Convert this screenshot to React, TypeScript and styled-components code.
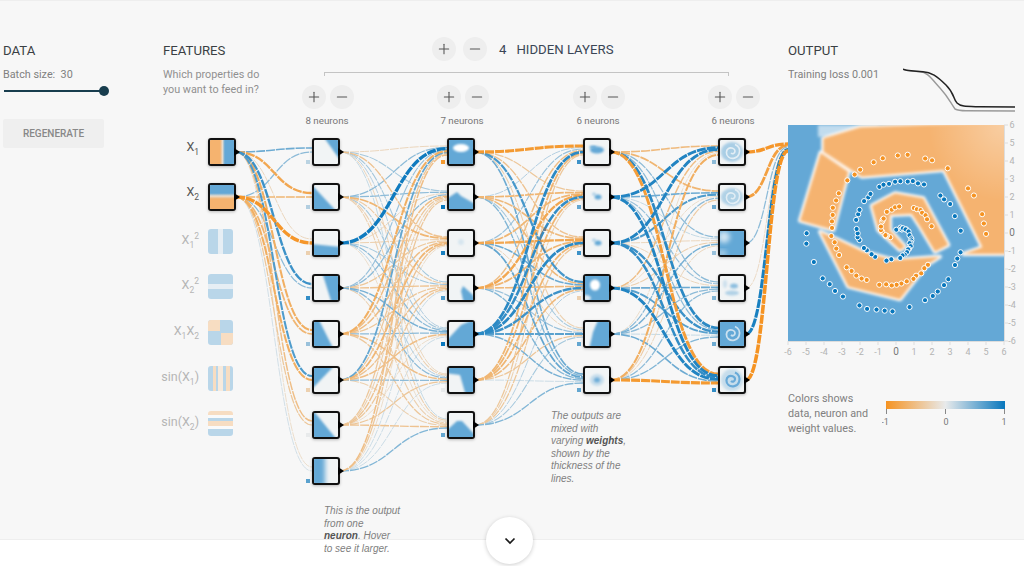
import React from 'react';
import styled, { createGlobalStyle } from 'styled-components';
import { Plus, Minus } from 'lucide-react';

const BLUE = '#0877bd';
const ORANGE = '#f59322';
const ZERO = '#e8eaeb';
const FILL_BLUE = '#64a8d6';
const FILL_ORANGE = '#f5b36f';
const COLUMN_LEFT = 163;
const NODE_SIZE = 28;

const LAYER_LEFT = [208, 312, 447, 583, 718];
const ROW_TOP = [137, 182, 228, 273, 319, 365, 410, 456];
const NEURONS = [2, 8, 7, 6, 6];

// weights, one row per source neuron: minus is orange, plus is blue
const WEIGHTS: number[][][] = [
  [
    [0.45, -0.7, -0.15, 0.7, -0.6, 0.6, -0.4, -0.1],
    [0.3, -0.5, -0.95, 0.3, -0.5, -0.6, -0.3, 0.06],
  ],
  [
    [-0.15, 0.2, -0.35, 0.2, 0.15, -0.15, 0.1],
    [0.3, 0.3, -0.5, -0.25, 0.2, -0.2, -0.2],
    [0.95, -0.15, -0.2, 0.2, 0.3, 0.15, -0.1],
    [0.25, 0.3, -0.3, -0.35, 0.4, 0.3, -0.2],
    [-0.6, -0.4, -0.4, -0.3, 0.3, -0.4, -0.3],
    [0.5, -0.3, -0.5, -0.35, -0.4, 0.3, -0.2],
    [-0.3, -0.2, -0.35, -0.3, -0.1, -0.3, -0.35],
    [-0.4, -0.3, -0.1, 0.08, 0.08, 0.08, 0.35],
  ],
  [
    [-0.9, -0.3, -0.35, 0.65, -0.2, 0.45],
    [0.15, -0.5, -0.45, -0.45, 0.2, 0.35],
    [0.25, -0.5, -0.7, 0.45, -0.15, 0.5],
    [-0.4, -0.7, -0.5, -0.45, 0.25, 0.35],
    [0.8, 0.75, 0.8, 0.7, 0.55, 0.4],
    [-0.5, -0.5, -0.5, -0.45, -0.3, 0.08],
    [-0.3, -0.2, -0.3, 0.15, 0.2, 0.35],
  ],
  [
    [-0.45, -0.5, 0.3, 0.3, 0.8, -0.85],
    [0.85, 0.45, 0.1, 0.25, 0.3, 0.85],
    [0.85, 0.6, -0.15, -0.15, 0.7, 0.75],
    [-0.4, -0.1, -0.2, 0.45, 0.55, 0.85],
    [-0.1, 0.3, 0.4, 0.3, 0.1, 0.45],
    [-0.6, -0.25, -0.15, 0.3, 0.35, -0.9],
  ],
];
const OUTPUT_WEIGHTS = [-0.95, -0.8, 0.3, -0.12, 0.9, -1];

const BIAS = [
  [],
  [0.12, 0.15, -0.2, 0.75, 0.25, -0.2, 0, 0.55],
  [-0.9, 1, 0.9, 0.6, 1, 0, 0.5],
  [0.7, 0.5, 0.7, -0.2, 0.5, 0.5],
  [0.3, 0.45, 0.25, 0.35, 0.45, 0.75],
];

const mix = (a: string, b: string, t: number) => {
  const ch = (s: string, i: number) => parseInt(s.slice(1 + i * 2, 3 + i * 2), 16);
  const out = [0, 1, 2].map((i) => Math.round(ch(a, i) + (ch(b, i) - ch(a, i)) * t));
  return `rgb(${out.join(',')})`;
};
const weightColor = (w: number) => mix(ZERO, w < 0 ? ORANGE : BLUE, Math.pow(Math.abs(w), 0.75));

const curve = (sx: number, sy: number, tx: number, ty: number) => {
  const mx = (sx + tx) / 2;
  return `M${sx} ${sy}C${mx} ${sy} ${mx} ${ty} ${tx} ${ty}`;
};

type Link = { d: string; w: number };

const buildLinks = () => {
  const links: Link[] = [];
  WEIGHTS.forEach((matrix, layer) => {
    matrix.forEach((row, s) => {
      row.forEach((w, t) => {
        const fan = layer === 0 ? -4 + s * 4 : -6 + (s / (matrix.length - 1)) * 9;
        links.push({
          d: curve(
            LAYER_LEFT[layer] + NODE_SIZE - COLUMN_LEFT,
            ROW_TOP[s] + NODE_SIZE / 2,
            LAYER_LEFT[layer + 1] - COLUMN_LEFT,
            ROW_TOP[t] + NODE_SIZE / 2 + fan,
          ),
          w,
        });
      });
    });
  });
  OUTPUT_WEIGHTS.forEach((w, s) => {
    links.push({
      d: curve(LAYER_LEFT[4] + NODE_SIZE - COLUMN_LEFT, ROW_TOP[s] + NODE_SIZE / 2, 788 - COLUMN_LEFT, 143 + s * 1.4),
      w,
    });
  });
  return links.sort((a, b) => Math.abs(a.w) - Math.abs(b.w));
};

const GlobalStyle = createGlobalStyle`
  html, body {
    margin: 0;
    padding: 0;
    background: #fff;
    font-family: Roboto, "Liberation Sans", sans-serif;
    overflow: hidden;
  }
`;

const Main = styled.main`
  display: flex;
  height: 539px;
  background: #f7f7f7;
  border-top: 1px solid #eee;
  box-sizing: border-box;
`;

const DataColumn = styled.section`
  width: 163px;
  padding: 43px 0 0 3px;
  box-sizing: border-box;
`;

const NetworkColumn = styled.section`
  position: relative;
  z-index: 1;
  width: 625px;
  padding-top: 43px;
  box-sizing: border-box;
`;

const OutputColumn = styled.section`
  position: relative;
  z-index: 2;
  width: 236px;
  padding-top: 43px;
  box-sizing: border-box;
`;

const Heading = styled.h4`
  margin: 0;
  font-size: 13.2px;
  line-height: 14px;
  font-weight: 400;
  color: #3a3f44;
`;

const Small = styled.div`
  margin-top: 10px;
  font-size: 10.8px;
  line-height: 14px;
  color: #808080;
  white-space: pre;
`;

const SliderRow = styled.div`
  position: relative;
  width: 101px;
  height: 10px;
  margin-top: 4px;
  &::before {
    content: '';
    position: absolute;
    left: 1px;
    right: 0;
    top: 4px;
    height: 2px;
    background: #183d4e;
  }
`;

const SliderThumb = styled.span`
  position: absolute;
  right: -5px;
  top: 0;
  width: 10px;
  height: 10px;
  border-radius: 50%;
  background: #183d4e;
`;

const RegenerateButton = styled.button`
  display: block;
  width: 101px;
  height: 29px;
  margin-top: 23px;
  padding: 0;
  border: 0;
  border-radius: 2px;
  background: #efefef;
  color: #888;
  font-family: Roboto, sans-serif;
  font-size: 10px;
  font-weight: 500;
`;

const NetworkHeader = styled.header`
  display: flex;
`;

const FeaturesBlock = styled.div`
  flex: 0 0 269px;
`;

const FeaturesHint = styled.p`
  margin: 9px 0 0;
  font-size: 10.8px;
  line-height: 15px;
  color: #909090;
`;

const HiddenControls = styled.div`
  display: flex;
  align-items: center;
  height: 24px;
  margin-top: -7px;
`;

const RoundButton = styled.button`
  display: flex;
  align-items: center;
  justify-content: center;
  width: 24px;
  height: 24px;
  padding: 0;
  margin-right: ${(p: { $gap?: number }) => p.$gap ?? 7}px;
  border: 0;
  border-radius: 50%;
  background: #eeeeee;
  color: #555;
`;

const LayerCount = styled.span`
  margin-left: 5px;
  font-size: 13.2px;
  color: #3a4656;
`;

const LayerTitle = styled.span`
  margin-left: 10px;
  font-size: 13.2px;
  color: #3a4656;
`;

const Bracket = styled.div`
  position: absolute;
  left: ${324 - COLUMN_LEFT}px;
  top: 71px;
  width: 405px;
  height: 4px;
  border: 1px solid #c4c4c4;
  border-bottom: 0;
  box-sizing: border-box;
`;

const LayerControl = styled.div<{ $left: number }>`
  position: absolute;
  left: ${(p) => p.$left}px;
  top: 84px;
  width: 52px;
`;

const LayerButtons = styled.div`
  display: flex;
`;

const NeuronCount = styled.div`
  margin-top: 6px;
  margin-left: -5px;
  width: 60px;
  text-align: center;
  font-size: 9.8px;
  line-height: 12px;
  color: #777;
`;

const LinkLayer = styled.svg`
  position: absolute;
  left: 0;
  top: 0;
  overflow: visible;
`;

const Node = styled.div<{ $left: number; $top: number }>`
  position: absolute;
  left: ${(p) => p.$left}px;
  top: ${(p) => p.$top}px;
  width: ${NODE_SIZE}px;
  height: ${NODE_SIZE}px;
  box-sizing: border-box;
  border: 2px solid #111;
  border-radius: 3px;
  background: #f1f4f5;
  box-shadow: 0 1px 3px rgba(0, 0, 0, 0.25);
  &::after {
    content: '';
    position: absolute;
    left: 24px;
    top: 7.5px;
    border-left: 6px solid #000;
    border-top: 4.5px solid transparent;
    border-bottom: 4.5px solid transparent;
  }
  svg {
    display: block;
    border-radius: 1px;
  }
`;

const BiasMark = styled.span<{ $color: string }>`
  position: absolute;
  left: -8px;
  bottom: 0;
  width: 4px;
  height: 4px;
  background: ${(p) => p.$color};
`;

const InputLabel = styled.div<{ $top: number; $on: boolean }>`
  position: absolute;
  left: ${139 - COLUMN_LEFT}px;
  top: ${(p) => p.$top}px;
  width: 60px;
  text-align: right;
  font-size: 12.5px;
  line-height: 16px;
  color: ${(p) => (p.$on ? '#555' : '#b5b5b5')};
  sub,
  sup {
    font-size: 8.5px;
    line-height: 0;
  }
`;

const InputThumb = styled.div<{ $top: number }>`
  position: absolute;
  left: ${208 - COLUMN_LEFT}px;
  top: ${(p) => p.$top}px;
  width: 25px;
  height: 25px;
  border-radius: 3px;
  overflow: hidden;
  opacity: 0.4;
  svg {
    display: block;
  }
`;

const Callout = styled.p<{ $left: number; $top: number }>`
  position: absolute;
  left: ${(p) => p.$left}px;
  top: ${(p) => p.$top}px;
  margin: 0;
  font-family: "Liberation Sans", Arial, sans-serif;
  font-style: italic;
  font-size: 10px;
  line-height: 12.6px;
  color: #808080;
  white-space: nowrap;
  b {
    color: #555;
  }
`;

const LossRow = styled.div`
  display: flex;
  height: 57px;
  margin-top: 10px;
`;

const LossLabel = styled.div`
  width: 115px;
  font-size: 10.8px;
  line-height: 14px;
  color: #808080;
`;

const PlotSvg = styled.svg`
  display: block;
  overflow: visible;
`;

const Legend = styled.div`
  display: flex;
  margin-top: 30px;
`;

const LegendText = styled.p`
  width: 94px;
  margin: 0;
  font-size: 10.8px;
  line-height: 15px;
  color: #808080;
`;

const Footer = styled.footer`
  position: relative;
  height: 27px;
  background: #fff;
  border-top: 1px solid #eee;
  box-sizing: border-box;
`;

const ScrollButton = styled.div`
  position: absolute;
  left: 486px;
  top: -23px;
  display: flex;
  align-items: center;
  justify-content: center;
  z-index: 3;
  width: 47px;
  height: 47px;
  border-radius: 50%;
  background: #fff;
  box-shadow: 0 1px 4px rgba(0, 0, 0, 0.2);
`;

// ---- neuron pictures ----

const Poly = ({ p, blur = 'tb' }: { p: string; blur?: string }) => <polygon points={p} fill={FILL_BLUE} filter={`url(#${blur})`} />;

const Blob = ({ x, y, rx, ry, o = 1, fill = FILL_BLUE, blur = 'tb2' }: { x: number; y: number; rx: number; ry: number; o?: number; fill?: string; blur?: string }) => (
  <ellipse cx={x} cy={y} rx={rx} ry={ry} fill={fill} opacity={o} filter={`url(#${blur})`} />
);

const Swirl = ({ color = FILL_BLUE, o = 1, width = 2 }: { color?: string; o?: number; width?: number }) => (
  <path
    d="M11 13c1.500 1.500 4 .5 4-2s-4-4-6.500-2.500-3 6 0 8.500 9 1.500 10.500-3-.5-8-4-9.500"
    fill="none"
    stroke={color}
    strokeWidth={width}
    opacity={o}
    filter="url(#tb0)"
  />
);

const FULL = '-4,-4 28,-4 28,28 -4,28';

const NEURON_ART: React.ReactNode[][] = [
  [],
  [
    <Poly p="9,-4 28,-4 28,23" />,
    <Poly p="-4,-2 -4,28 24,28" />,
    <Poly p="-4,13 28,16 28,28 -4,28" />,
    <Poly p="8,-4 28,-4 28,28 18,28" />,
    <Poly p="-4,-4 4,-4 20,28 -4,28" />,
    <Poly p="-4,-4 22,-4 -4,23" />,
    <Poly p="-4,-2 -2,-4 24,28 -4,28" />,
    <Poly p="-4,-4 11,-4 11,28 -4,28" blur="tb3" />,
  ],
  [
    <>
      <Poly p={FULL} />
      <Blob x={12} y={8} rx={8} ry={4} fill="#fff" />
    </>,
    <Poly p="-4,15 8,7 12,11 28,20 28,28 -4,28" />,
    <Blob x={12} y={11} rx={3} ry={3} o={0.18} />,
    <Poly p="12,15 14,10 24,19 28,28 15,28" />,
    <Poly p="-4,28 -2,18 12,3 28,-4 28,28" />,
    <Poly p="-4,-4 28,-4 28,28 17,28 11,7 -4,5" />,
    <Poly p="-4,19 8,8 13,8 28,24 28,28 -4,28" />,
  ],
  [
    <>
      <Blob x={12} y={10} rx={7} ry={3.5} />
      <Blob x={8} y={7} rx={3.5} ry={1.5} />
    </>,
    <>
      <Blob x={13} y={12} rx={3.5} ry={2.5} />
      <Blob x={9} y={9} rx={2} ry={1.5} o={0.5} />
    </>,
    <>
      <Blob x={13} y={12} rx={3.5} ry={2.5} />
      <Blob x={9} y={9} rx={2} ry={1.5} o={0.5} />
    </>,
    <>
      <Poly p={FULL} />
      <Blob x={10} y={9} rx={5} ry={5.5} fill="#fff" />
      <Blob x={1} y={22} rx={5} ry={3} fill="#dfeaf2" />
    </>,
    <Poly p="28,-4 28,28 4,28 8,10 14,-4" blur="tb2" />,
    <>
      <Blob x={12} y={12} rx={7} ry={6} o={0.3} />
      <Blob x={12} y={12} rx={3} ry={2.5} o={0.9} />
    </>,
  ],
  [
    <>
      <Blob x={12} y={12} rx={11} ry={10} o={0.5} />
      <Swirl color="#eef4f8" o={0.85} width={1.6} />
    </>,
    <>
      <Blob x={12} y={12} rx={11} ry={9} o={0.45} />
      <Swirl color="#eef4f8" o={0.8} width={1.6} />
    </>,
    <>
      <Poly p={FULL} />
      <Blob x={4} y={6} rx={6} ry={6} fill="#fff" o={0.7} blur="tb3" />
      <Blob x={2} y={22} rx={5} ry={3} fill="#fff" o={0.5} blur="tb3" />
    </>,
    <>
      <Blob x={14} y={10} rx={4} ry={2.5} o={0.7} />
      <Blob x={12} y={17} rx={7} ry={2.5} o={0.45} />
      <Blob x={5} y={8} rx={2} ry={4} o={0.25} />
    </>,
    <>
      <Poly p={FULL} />
      <Swirl color="#e6eff6" o={0.8} width={1.8} />
    </>,
    <>
      <Blob x={12} y={12} rx={11} ry={11} o={0.3} />
      <Swirl color="#5ea5d6" o={0.9} width={2.2} />
    </>,
  ],
];

const NeuronArt = ({ children }: { children: React.ReactNode }) => (
  <svg width={24} height={24} viewBox="0 0 24 24">
    {children}
  </svg>
);

const LIGHT_BLUE = '#5ea5d6';
const LIGHT_ORANGE = '#f9b774';

const stripes = (vertical: boolean, bands: [number, number, string][]) =>
  bands.map(([from, to, color]) =>
    vertical ? <rect key={from} x={from} y={0} width={to - from} height={25} fill={color} /> : <rect key={from} x={0} y={from} width={25} height={to - from} fill={color} />,
  );

const INPUTS: { label: React.ReactNode; art?: React.ReactNode }[] = [
  {
    label: (
      <>
        X<sub>1</sub>
      </>
    ),
  },
  {
    label: (
      <>
        X<sub>2</sub>
      </>
    ),
  },
  {
    label: (
      <>
        X<sub>1</sub>
        <sup>2</sup>
      </>
    ),
    art: stripes(true, [
      [0, 10, LIGHT_BLUE],
      [10, 15, '#cfe3f1'],
      [15, 25, LIGHT_BLUE],
    ]),
  },
  {
    label: (
      <>
        X<sub>2</sub>
        <sup>2</sup>
      </>
    ),
    art: stripes(false, [
      [0, 10, LIGHT_BLUE],
      [10, 15, '#cfe3f1'],
      [15, 25, LIGHT_BLUE],
    ]),
  },
  {
    label: (
      <>
        X<sub>1</sub>X<sub>2</sub>
      </>
    ),
    art: (
      <>
        <rect width={25} height={25} fill={LIGHT_BLUE} />
        <rect width={12} height={11} fill={LIGHT_ORANGE} />
        <rect x={13} y={13} width={12} height={12} fill={LIGHT_ORANGE} />
      </>
    ),
  },
  {
    label: (
      <>
        sin(X<sub>1</sub>)
      </>
    ),
    art: stripes(true, [
      [0, 5, LIGHT_BLUE],
      [5, 8, LIGHT_ORANGE],
      [8, 10, LIGHT_BLUE],
      [10, 15, '#f8d9b5'],
      [15, 18, LIGHT_BLUE],
      [18, 22, LIGHT_ORANGE],
      [22, 25, LIGHT_BLUE],
    ]),
  },
  {
    label: (
      <>
        sin(X<sub>2</sub>)
      </>
    ),
    art: stripes(false, [
      [0, 4, LIGHT_ORANGE],
      [4, 7, '#fff'],
      [7, 10, LIGHT_BLUE],
      [10, 15, LIGHT_ORANGE],
      [15, 18, '#fff'],
      [18, 25, LIGHT_BLUE],
    ]),
  },
];

// ---- output heatmap ----

const toPlot = (pts: number[][]) => pts.map(([x, y]) => `${(x - 24) / 3},${(y - 285) / 3}`).join(' ');

const ORANGE_AREAS = [
  toPlot([[130, 325], [240, 292], [690, 275], [690, 672], [550, 672], [607, 652], [492, 420], [245, 440], [130, 365]]),
  toPlot([[122, 368], [205, 425], [160, 600], [60, 572]]),
  toPlot([[165, 625], [250, 665], [340, 690], [480, 680], [440, 705], [360, 808], [205, 770], [120, 605]]),
  toPlot([[275, 527], [345, 490], [430, 505], [505, 645], [465, 665], [420, 590], [395, 552], [330, 555], [330, 600], [375, 650], [360, 660], [295, 600]]),
];

const spiralPoints = () => {
  let seed = 17;
  const rnd = () => {
    seed = (seed * 16807) % 2147483647;
    return seed / 2147483647;
  };
  const points: { x: number; y: number; color: string }[] = [];
  [
    { delta: 0, color: BLUE },
    { delta: Math.PI, color: ORANGE },
  ].forEach(({ delta, color }) => {
    for (let i = 3; i <= 100; i++) {
      const keep = rnd() < 0.72;
      const r = (i / 100) * 5;
      const t = 1.75 * (i / 100) * 2 * Math.PI + delta;
      const jx = (rnd() - 0.5) * 0.12;
      const jy = (rnd() - 0.5) * 0.12;
      if (keep || i === 100) {
        points.push({ x: 108 + (r * Math.sin(t) + jx) * 18, y: 108 - (r * Math.cos(t) + jy) * 18, color });
      }
    }
  });
  return points;
};

const TICKS = [-6, -5, -4, -3, -2, -1, 0, 1, 2, 3, 4, 5, 6];

const Plot = () => (
  <PlotSvg width={236} height={236}>
    <defs>
      <radialGradient id="cornerFade" cx="1" cy="0" r="0.35">
        <stop offset="0" stopColor="#fff" stopOpacity="0.35" />
        <stop offset="1" stopColor="#fff" stopOpacity="0" />
      </radialGradient>
      <clipPath id="plotClip">
        <rect width={216} height={216} />
      </clipPath>
    </defs>
    <g clipPath="url(#plotClip)">
      <rect width={216} height={216} fill={FILL_BLUE} />
      <rect x={30} y={0} width={60} height={12} fill="#fff" opacity={0.6} filter="url(#pb2)" />
      <g filter="url(#pb2)">
        {ORANGE_AREAS.map((p) => (
          <polygon key={p} points={p} fill="#fff" stroke="#fff" strokeWidth={4} strokeLinejoin="round" />
        ))}
      </g>
      <g filter="url(#pb1)">
        {ORANGE_AREAS.map((p) => (
          <polygon key={p} points={p} fill={FILL_ORANGE} />
        ))}
      </g>
      <rect width={216} height={216} fill="url(#cornerFade)" />
      {spiralPoints().map((pt, i) => (
        <circle key={i} cx={pt.x} cy={pt.y} r={2.6} fill={pt.color} stroke="#fff" strokeWidth={1} />
      ))}
    </g>
    <path d="M0 216.500H216M216.500 0V216" stroke="#ddd" fill="none" />
    {TICKS.map((v) => {
      const pos = 108 + v * 18;
      const color = v === 0 ? '#777' : '#b3b3b3';
      return (
        <g key={v} fontFamily="Roboto, sans-serif" fontSize={v === 0 ? 10 : 9} fill={color}>
          <path d={`M${pos} 216v4M216 ${pos}h4`} stroke="#ddd" />
          <text x={pos} y={230} textAnchor="middle">
            {v}
          </text>
          <text x={224} y={111 - v * 18} textAnchor="middle">
            {v}
          </text>
        </g>
      );
    })}
  </PlotSvg>
);

const LossChart = () => (
  <svg width={116} height={46} viewBox="0 0 116 46">
    <path d="M0 1.300C5 3 10 3.500 17 3.700S28 10 37 20S47 34 52 41C55 42.500 58 42.700 63 42.700L112 43" fill="none" stroke="#9a9a9a" strokeWidth={1.4} />
    <path d="M0 1.300C5 3 12 3.500 20 3.700S34 8 43 17S50 31 54 35S64 38.500 77 38.700L112 39" fill="none" stroke="#222" strokeWidth={1.5} />
  </svg>
);

const ColorLegend = () => (
  <svg width={130} height={40} viewBox="0 0 130 40">
    <defs>
      <linearGradient id="legendBar">
        <stop offset="0" stopColor={ORANGE} />
        <stop offset="0.5" stopColor={ZERO} />
        <stop offset="1" stopColor={BLUE} />
      </linearGradient>
    </defs>
    <rect x={4} y={10} width={119} height={8} fill="url(#legendBar)" />
    <path d="M4.500 18v5M63.500 18v5M122.500 18v5" stroke="#888" />
    <g fontFamily="Roboto, sans-serif" fontSize={9} fill="#777" textAnchor="middle">
      <text x={3} y={34}>
        -1
      </text>
      <text x={64} y={34}>
        0
      </text>
      <text x={122} y={34}>
        1
      </text>
    </g>
  </svg>
);

const LAYER_CONTROL_LEFT = [302, 437, 573, 708].map((x) => x - COLUMN_LEFT);
const LAYER_NEURONS = [8, 7, 6, 6];

const App = () => {
  const links = buildLinks();
  return (
    <>
      <GlobalStyle />
      <svg width={0} height={0} style={{ position: 'absolute' }}>
        <defs>
          <filter id="tb0" x="-30%" y="-30%" width="160%" height="160%">
            <feGaussianBlur stdDeviation="0.5" />
          </filter>
          <filter id="tb" x="-30%" y="-30%" width="160%" height="160%">
            <feGaussianBlur stdDeviation="0.8" />
          </filter>
          <filter id="tb2" x="-40%" y="-40%" width="180%" height="180%">
            <feGaussianBlur stdDeviation="1.3" />
          </filter>
          <filter id="tb3" x="-60%" y="-30%" width="220%" height="160%">
            <feGaussianBlur stdDeviation="2.4" />
          </filter>
          <filter id="pb1" filterUnits="userSpaceOnUse" x="-10" y="-10" width="240" height="240">
            <feGaussianBlur stdDeviation="1.6" />
          </filter>
          <filter id="pb2" filterUnits="userSpaceOnUse" x="-10" y="-10" width="240" height="240">
            <feGaussianBlur stdDeviation="1.8" />
          </filter>
        </defs>
      </svg>
      <Main>
        <DataColumn>
          <Heading>DATA</Heading>
          <Small>{'Batch size:  30'}</Small>
          <SliderRow>
            <SliderThumb />
          </SliderRow>
          <RegenerateButton>REGENERATE</RegenerateButton>
        </DataColumn>
        <NetworkColumn>
          <NetworkHeader>
            <FeaturesBlock>
              <Heading>FEATURES</Heading>
              <FeaturesHint>
                Which properties do
                <br />
                you want to feed in?
              </FeaturesHint>
            </FeaturesBlock>
            <HiddenControls>
              <RoundButton>
                <Plus size={16} strokeWidth={1.6} />
              </RoundButton>
              <RoundButton>
                <Minus size={16} strokeWidth={1.6} />
              </RoundButton>
              <LayerCount>4</LayerCount>
              <LayerTitle>HIDDEN LAYERS</LayerTitle>
            </HiddenControls>
          </NetworkHeader>
          <Bracket />
          {LAYER_CONTROL_LEFT.map((left, i) => (
            <LayerControl key={left} $left={left}>
              <LayerButtons>
                <RoundButton $gap={4}>
                  <Plus size={16} strokeWidth={1.6} />
                </RoundButton>
                <RoundButton $gap={0}>
                  <Minus size={16} strokeWidth={1.6} />
                </RoundButton>
              </LayerButtons>
              <NeuronCount>{LAYER_NEURONS[i]} neurons</NeuronCount>
            </LayerControl>
          ))}
          <LinkLayer width={625} height={500}>
            {links.map((l, i) => (
              <path key={i} d={l.d} fill="none" stroke={weightColor(l.w)} strokeWidth={0.85 + Math.pow(Math.abs(l.w), 1.6) * 2.7} strokeDasharray="9 1" />
            ))}
            <path d="M155 345C149 335 150 328 155 322" fill="none" stroke="#777" strokeWidth={0.7} />
            <path d="M153.500 324.500L155.500 321L156.800 324.800" fill="#777" stroke="none" />
            <path d="M382 251C376 240 376 234 382 227" fill="none" stroke="#777" strokeWidth={0.7} />
            <path d="M380 229.500L382.500 226L383.200 230" fill="#777" stroke="none" />
          </LinkLayer>
          {INPUTS.map((input, i) => (
            <InputLabel key={i} $top={ROW_TOP[i] + (input.art ? 3 : 1)} $on={!input.art}>
              {input.label}
            </InputLabel>
          ))}
          {INPUTS.map((input, i) =>
            input.art ? (
              <InputThumb key={i} $top={ROW_TOP[i]}>
                <svg width={25} height={25}>
                  {input.art}
                </svg>
              </InputThumb>
            ) : null,
          )}
          <Node $left={LAYER_LEFT[0] - COLUMN_LEFT} $top={ROW_TOP[0]}>
            <svg width={24} height={24}>
              <defs>
                <linearGradient id="x1Fill">
                  <stop offset="0.42" stopColor={FILL_ORANGE} />
                  <stop offset="0.52" stopColor="#e8dccd" />
                  <stop offset="0.62" stopColor={FILL_BLUE} />
                </linearGradient>
                <linearGradient id="x2Fill" x2="0" y2="1">
                  <stop offset="0.34" stopColor={FILL_BLUE} />
                  <stop offset="0.46" stopColor="#e8dccd" />
                  <stop offset="0.58" stopColor={FILL_ORANGE} />
                </linearGradient>
              </defs>
              <rect width={24} height={24} fill="url(#x1Fill)" />
            </svg>
          </Node>
          <Node $left={LAYER_LEFT[0] - COLUMN_LEFT} $top={ROW_TOP[1]}>
            <svg width={24} height={24}>
              <rect width={24} height={24} fill="url(#x2Fill)" />
            </svg>
          </Node>
          {NEURONS.slice(1).map((count, layer) =>
            Array.from({ length: count }, (_, row) => (
              <Node key={`${layer}-${row}`} $left={LAYER_LEFT[layer + 1] - COLUMN_LEFT} $top={ROW_TOP[row]}>
                <NeuronArt>{NEURON_ART[layer + 1][row]}</NeuronArt>
                <BiasMark $color={weightColor(BIAS[layer + 1][row])} />
              </Node>
            )),
          )}
          <Callout $left={324 - COLUMN_LEFT} $top={504}>
            This is the output
            <br />
            from one
            <br />
            <b>neuron</b>. Hover
            <br />
            to see it larger.
          </Callout>
          <Callout $left={551 - COLUMN_LEFT} $top={409}>
            The outputs are
            <br />
            mixed with
            <br />
            varying <b>weights</b>,
            <br />
            shown by the
            <br />
            thickness of the
            <br />
            lines.
          </Callout>
        </NetworkColumn>
        <OutputColumn>
          <Heading>OUTPUT</Heading>
          <LossRow>
            <LossLabel>Training loss 0.001</LossLabel>
            <LossChart />
          </LossRow>
          <Plot />
          <Legend>
            <LegendText>
              Colors shows
              <br />
              data, neuron and
              <br />
              weight values.
            </LegendText>
            <ColorLegend />
          </Legend>
        </OutputColumn>
      </Main>
      <Footer>
        <ScrollButton>
          <svg width={12} height={8} viewBox="0 0 12 8">
            <path d="M1.500 1.500L6 6L10.500 1.500" fill="none" stroke="#1a1a1a" strokeWidth={1.7} />
          </svg>
        </ScrollButton>
      </Footer>
    </>
  );
};

export default App;
